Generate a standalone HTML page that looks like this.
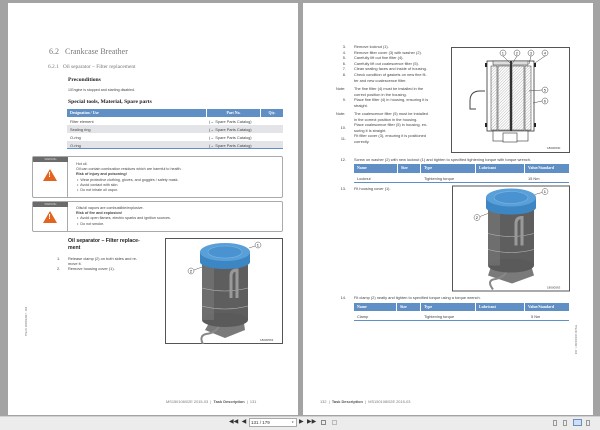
<!DOCTYPE html>
<html><head><meta charset="utf-8"><style>
*{margin:0;padding:0;box-sizing:border-box}
body{width:600px;height:430px;background:#a3a3a3;position:relative;overflow:hidden;font-family:"Liberation Sans",sans-serif;color:#333}
.pg{position:absolute;background:#fff;top:3px;height:412px}
.a{position:absolute;white-space:nowrap;font-size:3.9px;line-height:5px;color:#444}
.serif{font-family:"Liberation Serif",serif}
.b{font-weight:bold;color:#222}
.hdr{position:absolute;background:#5f8fc4;color:#fff;font-size:3.9px;line-height:8px;font-family:"Liberation Serif",serif;font-weight:bold}
.cell{position:absolute;top:0;height:100%;padding-left:3px;border-right:1px solid #fff}
.warn{position:absolute;border:1px solid #aaa;border-radius:2px;background:#fff}
.wl{position:absolute;left:0;top:0;width:35px;height:100%;border-right:1px solid #aaa}
.wbar{position:absolute;left:0;top:0;width:35px;height:5px;background:#6b6b6b;color:#ddd;font-size:2.5px;line-height:5px;text-align:center}
.tri{position:absolute;left:10px;width:0;height:0;border-left:7px solid transparent;border-right:7px solid transparent;border-bottom:12px solid #e2641f}
.tri:after{content:"!";position:absolute;left:-1.6px;top:3px;color:#fff;font-size:7px;font-weight:bold;line-height:7px}
.tb{position:absolute;left:0;top:416px;width:600px;height:14px;background:#ececec;border-top:1px solid #d0d0d0}
</style></head><body>

<!-- LEFT PAGE -->
<div class="pg" style="left:8px;width:290px"></div>
<div class="a serif" style="left:49px;top:47px;font-size:8px;line-height:10px;color:#777">6.2&nbsp;&nbsp;&nbsp;Crankcase Breather</div>
<div class="a serif" style="left:48px;top:64px;font-size:5.4px;line-height:7px;color:#777">6.2.1&nbsp;&nbsp;&nbsp;Oil separator – Filter replacement</div>
<div class="a serif b" style="left:68px;top:77px;font-size:5.6px;line-height:7px">Preconditions</div>
<div class="a" style="left:68px;top:88px;font-size:3.6px">☑Engine is stopped and starting disabled.</div>
<div class="a serif b" style="left:68px;top:99px;font-size:5.6px;line-height:7px">Special tools, Material, Spare parts</div>

<div class="hdr" style="left:67px;top:109px;width:216px;height:8px">
<div class="cell" style="left:0;width:140px">Designation / Use</div>
<div class="cell" style="left:140px;width:54px;text-align:center;padding:0">Part No.</div>
<div class="cell" style="left:194px;width:22px;text-align:center;padding:0;border:0">Qty.</div>
</div>
<div style="position:absolute;left:67px;top:125px;width:216px;height:8px;background:#e3e4e8"></div>
<div style="position:absolute;left:67px;top:141px;width:216px;height:8px;background:#e3e4e8;border-bottom:1px solid #5f8fc4"></div>
<div class="a" style="left:70px;top:119px">Filter element</div>
<div class="a" style="left:70px;top:127px">Sealing ring</div>
<div class="a" style="left:70px;top:135px">O-ring</div>
<div class="a" style="left:70px;top:143px">O-ring</div>
<div class="a" style="left:209px;top:119px">(→ Spare Parts Catalog)</div>
<div class="a" style="left:209px;top:127px">(→ Spare Parts Catalog)</div>
<div class="a" style="left:209px;top:135px">(→ Spare Parts Catalog)</div>
<div class="a" style="left:209px;top:143px">(→ Spare Parts Catalog)</div>

<div class="warn" style="left:32px;top:156px;width:251px;height:42px">
<div class="wl"></div><div class="wbar">WARNING</div><div class="tri" style="top:12px"></div>
<div class="a" style="left:43px;top:5px;font-size:3.7px;line-height:5.2px;white-space:normal;width:200px">Hot oil.<br>Oil can contain combustion residues which are harmful to health.<br><b>Risk of injury and poisoning!</b><br>&nbsp;•&nbsp; Wear protective clothing, gloves, and goggles / safety mask.<br>&nbsp;•&nbsp; Avoid contact with skin.<br>&nbsp;•&nbsp; Do not inhale oil vapor.</div>
</div>
<div class="warn" style="left:32px;top:201px;width:251px;height:31px">
<div class="wl"></div><div class="wbar">WARNING</div><div class="tri" style="top:9px"></div>
<div class="a" style="left:43px;top:4px;font-size:3.7px;line-height:5.2px;white-space:normal;width:200px">Oils/oil vapors are combustible/explosive.<br><b>Risk of fire and explosion!</b><br>&nbsp;•&nbsp; Avoid open flames, electric sparks and ignition sources.<br>&nbsp;•&nbsp; Do not smoke.</div>
</div>

<div class="a b" style="left:68px;top:238px;font-size:5.2px;line-height:7px">Oil separator – Filter replace-<br>ment</div>
<div class="a" style="left:57px;top:256px;line-height:5.2px">1.<br><br>2.</div>
<div class="a" style="left:68px;top:256px;line-height:5.2px">Release clamp (2) on both sides and re-<br>move it.<br>Remove housing cover (1).</div>

<svg style="position:absolute;left:165px;top:238px" width="118" height="106" viewBox="0 0 118 106">
<rect x="0.5" y="0.5" width="117" height="105" fill="#fff" stroke="#555"/>
<path d="M47 80 L40 92 L60 100 L80 92 L78 78 Z" fill="#7a7a7a"/>
<path d="M55 78 q2 16 -14 18 q-8 2 -2 12" stroke="#888" stroke-width="2" fill="none"/>
<rect x="37" y="24" width="46" height="58" fill="#5e5e5e"/>
<ellipse cx="60" cy="82" rx="23" ry="7" fill="#5a5a5a"/>
<rect x="37" y="24" width="12" height="58" fill="#888" opacity=".4"/>
<path d="M37 50 q23 6 46 0 M37 68 q23 6 46 0" stroke="#bbb" stroke-width=".6" fill="none"/>
<path d="M66 60 v-22 q0-6 6-6 v28" stroke="#999" stroke-width="3" fill="none"/>
<rect x="35" y="14" width="50" height="10" fill="#3d86c4"/>
<ellipse cx="60" cy="24" rx="25" ry="7" fill="#3d86c4"/>
<ellipse cx="60" cy="14" rx="25" ry="9" fill="#5aa0d8"/>
<ellipse cx="60" cy="14" rx="17" ry="6" fill="#4a93d0" stroke="#7ab8e6" stroke-width=".6"/>
<line x1="84" y1="10" x2="90" y2="8" stroke="#555" stroke-width=".5"/>
<circle cx="93" cy="7" r="3" fill="#fff" stroke="#555" stroke-width=".5"/><text x="91.8" y="8.5" font-size="4" font-family="Liberation Sans">1</text>
<line x1="29" y1="32" x2="37" y2="29" stroke="#555" stroke-width=".5"/>
<circle cx="26" cy="33" r="3" fill="#fff" stroke="#555" stroke-width=".5"/><text x="24.8" y="34.5" font-size="4" font-family="Liberation Sans">2</text>
<text x="95" y="103" font-size="3" font-family="Liberation Sans" fill="#444">18000563</text>
</svg>

<div class="a" style="left:24px;top:336px;font-size:2.5px;transform:rotate(-90deg);transform-origin:left top;color:#666">TIM-ID: 0000013117 - 004</div>
<div class="a" style="left:166px;top:399px;font-size:3.9px;color:#777">MS150108/02E 2015-03 &nbsp;| &nbsp;<b style="color:#555">Task Description</b> &nbsp;| &nbsp;131</div>

<!-- RIGHT PAGE -->
<div class="pg" style="left:303px;width:290px"></div>
<div class="a" style="left:336px;top:44px;line-height:5.6px;text-align:right;width:10px">3.<br>4.<br>5.<br>6.<br>7.<br>8.</div>
<div class="a" style="left:354px;top:44px;line-height:5.6px">Remove locknut (1).<br>Remove filter cover (3) with washer (2).<br>Carefully lift out fine filter (4).<br>Carefully lift out coalescence filter (5).<br>Clean sealing faces and inside of housing.<br>Check condition of gaskets on new fine fil-<br>ter and new coalescence filter.</div>
<div class="a" style="left:336px;top:86px;line-height:5.6px">Note:</div>
<div class="a" style="left:336px;top:97px;text-align:right;width:10px">9.</div>
<div class="a" style="left:354px;top:86px;line-height:5.6px">The fine filter (4) must be installed in the<br>correct position in the housing.<br>Place fine filter (4) in housing, ensuring it is<br>straight.</div>
<div class="a" style="left:336px;top:111px">Note:</div>
<div class="a" style="left:334px;top:122px;text-align:right;width:12px;line-height:11.4px">10.<br>11.</div>
<div class="a" style="left:354px;top:111px;line-height:5.6px">The coalescence filter (5) must be installed<br>in the correct position in the housing.<br>Place coalescence filter (5) in housing, en-<br>suring it is straight.<br>Fit filter cover (3), ensuring it is positioned<br>correctly.</div>

<svg style="position:absolute;left:451px;top:47px" width="119" height="106" viewBox="0 0 119 106">
<rect x="0.5" y="0.5" width="118" height="105" fill="#fff" stroke="#555"/>
<defs><pattern id="h" width="2" height="2" patternUnits="userSpaceOnUse" patternTransform="rotate(45)"><line x1="0" y1="0" x2="0" y2="2" stroke="#888" stroke-width=".6"/></pattern></defs>
<path d="M25 62 h-6 v-8 q0-10 10-10 h5" stroke="#444" stroke-width="1" fill="#fff"/>
<rect x="34" y="16" width="4" height="4" fill="#222"/><rect x="81" y="16" width="4" height="4" fill="#222"/>
<rect x="34" y="76" width="4" height="4" fill="#222"/><rect x="81" y="76" width="4" height="4" fill="#222"/>
<rect x="36" y="14" width="47" height="70" fill="#fff" stroke="#333" stroke-width=".8"/>
<rect x="42" y="14" width="35" height="4" fill="#ddd" stroke="#333" stroke-width=".5"/>
<rect x="40" y="19" width="6" height="64" fill="url(#h)" stroke="#333" stroke-width=".5"/>
<rect x="47" y="19" width="12" height="64" fill="url(#h)" stroke="#333" stroke-width=".5"/>
<rect x="61" y="19" width="12" height="64" fill="url(#h)" stroke="#333" stroke-width=".5"/>
<rect x="74" y="19" width="6" height="64" fill="url(#h)" stroke="#333" stroke-width=".5"/>
<rect x="59" y="14" width="2" height="70" fill="#333"/>
<rect x="42" y="84" width="35" height="10" fill="#fff" stroke="#333" stroke-width=".6"/>
<rect x="52" y="86" width="14" height="9" fill="#fff" stroke="#333" stroke-width=".6"/>
<g font-size="4" font-family="Liberation Sans" fill="#333" stroke-width=".5">
<circle cx="52" cy="6" r="3" fill="#fff" stroke="#444"/><text x="50.8" y="7.5">1</text>
<circle cx="66" cy="6" r="3" fill="#fff" stroke="#444"/><text x="64.8" y="7.5">2</text>
<circle cx="80" cy="6" r="3" fill="#fff" stroke="#444"/><text x="78.8" y="7.5">3</text>
<circle cx="94" cy="6" r="3" fill="#fff" stroke="#444"/><text x="92.8" y="7.5">4</text>
<circle cx="94" cy="43" r="3" fill="#fff" stroke="#444"/><text x="92.8" y="44.5">5</text>
<circle cx="94" cy="54" r="3" fill="#fff" stroke="#444"/><text x="92.8" y="55.5">6</text>
<path d="M52 9 L60 17 M66 9 L61 17 M80 9 L78 17 M94 9 L84 16 M91 43 L78 44 M91 54 L82 56" stroke="#444" fill="none"/>
</g>
<text x="96" y="102" font-size="3" font-family="Liberation Sans" fill="#444">18000530</text>
</svg>

<div class="a" style="left:334px;top:157px;width:12px;text-align:right">12.</div>
<div class="a" style="left:354px;top:157px">Screw on washer (2) with new locknut (1) and tighten to specified tightening torque with torque wrench.</div>
<div class="hdr" style="left:354px;top:164px;width:215px;height:9px;line-height:9px">
<div class="cell" style="left:0;width:44px">Name</div><div class="cell" style="left:44px;width:23px">Size</div><div class="cell" style="left:67px;width:55px">Type</div><div class="cell" style="left:122px;width:49px">Lubricant</div><div class="cell" style="left:171px;width:44px;border:0">Value/Standard</div>
</div>
<div style="position:absolute;left:354px;top:182px;width:215px;height:1px;background:#5f8fc4"></div>
<div class="a" style="left:357px;top:176px">Locknut</div><div class="a" style="left:424px;top:176px">Tightening torque</div><div class="a" style="left:528px;top:176px">15 Nm</div>

<div class="a" style="left:334px;top:186px;width:12px;text-align:right">13.</div>
<div class="a" style="left:354px;top:186px">Fit housing cover (1).</div>

<svg style="position:absolute;left:452px;top:185px" width="118" height="107" viewBox="0 0 118 106">
<rect x="0.5" y="0.5" width="117" height="105" fill="#fff" stroke="#555"/>
<path d="M40 78 L36 90 L60 98 L82 90 L78 76 Z" fill="#7a7a7a"/>
<path d="M55 78 q2 14 -14 16 q-6 2 0 10" stroke="#888" stroke-width="2" fill="none"/>
<rect x="36" y="22" width="46" height="58" fill="#5e5e5e"/>
<ellipse cx="59" cy="80" rx="23" ry="7" fill="#5a5a5a"/>
<rect x="36" y="22" width="12" height="58" fill="#888" opacity=".4"/>
<path d="M36 48 q23 6 46 0 M36 64 q23 6 46 0" stroke="#bbb" stroke-width=".6" fill="none"/>
<path d="M64 60 v-22 q0-6 6-6 v28" stroke="#999" stroke-width="3" fill="none"/>
<rect x="34" y="12" width="50" height="10" fill="#3d86c4"/>
<ellipse cx="59" cy="22" rx="25" ry="7" fill="#3d86c4"/>
<ellipse cx="59" cy="12" rx="25" ry="9" fill="#5aa0d8"/>
<ellipse cx="59" cy="12" rx="17" ry="6" fill="#4a93d0" stroke="#7ab8e6" stroke-width=".6"/>
<line x1="83" y1="9" x2="90" y2="7" stroke="#555" stroke-width=".5"/>
<circle cx="93" cy="6" r="3" fill="#fff" stroke="#555" stroke-width=".5"/><text x="91.8" y="7.5" font-size="4" font-family="Liberation Sans">1</text>
<line x1="28" y1="31" x2="36" y2="28" stroke="#555" stroke-width=".5"/>
<circle cx="25" cy="32" r="3" fill="#fff" stroke="#555" stroke-width=".5"/><text x="23.8" y="33.5" font-size="4" font-family="Liberation Sans">2</text>
<text x="95" y="103" font-size="3" font-family="Liberation Sans" fill="#444">18000563</text>
</svg>

<div class="a" style="left:334px;top:295px;width:12px;text-align:right">14.</div>
<div class="a" style="left:354px;top:295px">Fit clamp (2) neatly and tighten to specified torque using a torque wrench.</div>
<div class="hdr" style="left:354px;top:303px;width:215px;height:8px">
<div class="cell" style="left:0;width:43px">Name</div><div class="cell" style="left:43px;width:24px">Size</div><div class="cell" style="left:67px;width:55px">Type</div><div class="cell" style="left:122px;width:49px">Lubricant</div><div class="cell" style="left:171px;width:44px;border:0">Value/Standard</div>
</div>
<div style="position:absolute;left:354px;top:320px;width:215px;height:1px;background:#5f8fc4"></div>
<div class="a" style="left:357px;top:314px">Clamp</div><div class="a" style="left:424px;top:314px">Tightening torque</div><div class="a" style="left:531px;top:314px">5 Nm</div>
<div class="a" style="left:578px;top:325px;font-size:2.5px;transform:rotate(90deg);transform-origin:left top;color:#666">TIM-ID: 0000013117 - 004</div>
<div class="a" style="left:320px;top:399px;font-size:3.9px;color:#777">132 &nbsp;| &nbsp;<b style="color:#555">Task Description</b> &nbsp;| &nbsp;MS150108/02E 2015-03</div>

<!-- TOOLBAR -->
<div class="tb"></div>
<div class="a" style="left:229px;top:419px;font-size:6px;line-height:7px;color:#333">◀◀&nbsp; ◀</div>
<div style="position:absolute;left:249px;top:418px;width:48px;height:9px;background:#fff;border:1px solid #aaa"></div>
<div class="a" style="left:251px;top:420px;font-size:4.5px;color:#333">131 / 179</div>
<div class="a" style="left:292px;top:420px;font-size:3px;color:#333">▾</div>
<div class="a" style="left:299px;top:419px;font-size:6px;line-height:7px;color:#333">▶&nbsp; ▶▶</div>
<div style="position:absolute;left:321px;top:420px;width:5px;height:5px;border:1px solid #888"></div>
<div style="position:absolute;left:332px;top:420px;width:5px;height:5px;border:1px solid #bbb"></div>
<div style="position:absolute;left:553px;top:420px;width:4px;height:6px;border:1px solid #999"></div>
<div style="position:absolute;left:563px;top:420px;width:4px;height:6px;border:1px solid #999"></div>
<div style="position:absolute;left:573px;top:419px;width:9px;height:7px;border:1px solid #6a8fc0;background:#cfe0f5"></div>
<div style="position:absolute;left:586px;top:420px;width:4px;height:6px;border:1px solid #999"></div>
</body></html>
